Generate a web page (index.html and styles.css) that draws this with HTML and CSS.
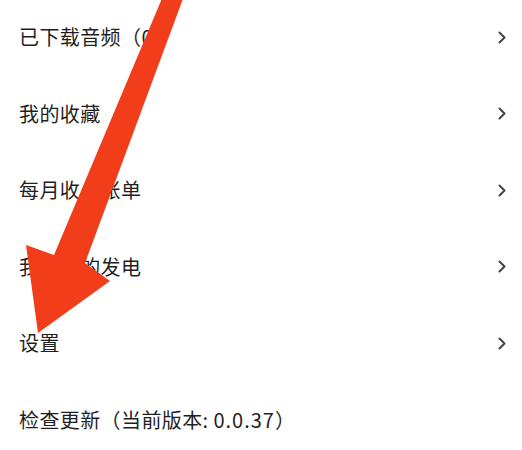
FILE: index.html
```html
<!DOCTYPE html>
<html lang="zh-CN">
<head>
<meta charset="utf-8">
<title>设置列表</title>
<link rel="stylesheet" href="styles.css">
</head>
<body>
<div class="page">
  <ul class="menu">
    <li class="row"><span class="label">已下载音频（0）</span><svg class="chev" viewBox="0 0 8 13"><path d="M1.5 1.5 L6.5 6.5 L1.5 11.5"/></svg></li>
    <li class="row"><span class="label">我的收藏</span><svg class="chev" viewBox="0 0 8 13"><path d="M1.5 1.5 L6.5 6.5 L1.5 11.5"/></svg></li>
    <li class="row"><span class="label">每月收入账单</span><svg class="chev" viewBox="0 0 8 13"><path d="M1.5 1.5 L6.5 6.5 L1.5 11.5"/></svg></li>
    <li class="row"><span class="label">我收到的发电</span><svg class="chev" viewBox="0 0 8 13"><path d="M1.5 1.5 L6.5 6.5 L1.5 11.5"/></svg></li>
    <li class="row"><span class="label">设置</span><svg class="chev" viewBox="0 0 8 13"><path d="M1.5 1.5 L6.5 6.5 L1.5 11.5"/></svg></li>
    <li class="row"><span class="label">检查更新（当前版本: <span class="num">0.0.37</span>）</span></li>
  </ul>
  <svg class="arrow" viewBox="0 0 522 450" aria-hidden="true">
    <polygon points="163,-4 184,-4 85,263 110,281 38,333 26,245 54,255"/>
  </svg>
</div>
</body>
</html>
```
FILE: styles.css
```css
html, body {
  margin: 0;
  padding: 0;
  background: #ffffff;
}
body {
  font-family: "Noto Sans CJK SC", "Noto Sans", sans-serif;
  color: #1f1f1f;
}
.page {
  position: relative;
  width: 522px;
  height: 450px;
  overflow: hidden;
}
.menu {
  list-style: none;
  margin: -1.3px 0 0 0;
  padding: 0;
}
.row {
  height: 76.6px;
  display: flex;
  align-items: center;
  justify-content: space-between;
  padding: 0 16px 0 19px;
  box-sizing: border-box;
}
.label {
  font-size: 20px;
  line-height: 1;
  letter-spacing: 0.4px;
}
.num {
  letter-spacing: 1px;
}
.chev {
  width: 8px;
  height: 13px;
  fill: none;
  stroke: #444444;
  stroke-width: 2;
  stroke-linecap: round;
  stroke-linejoin: round;
}
.arrow {
  position: absolute;
  left: 0;
  top: 0;
  width: 522px;
  height: 450px;
  fill: #f23d1b;
}
```
